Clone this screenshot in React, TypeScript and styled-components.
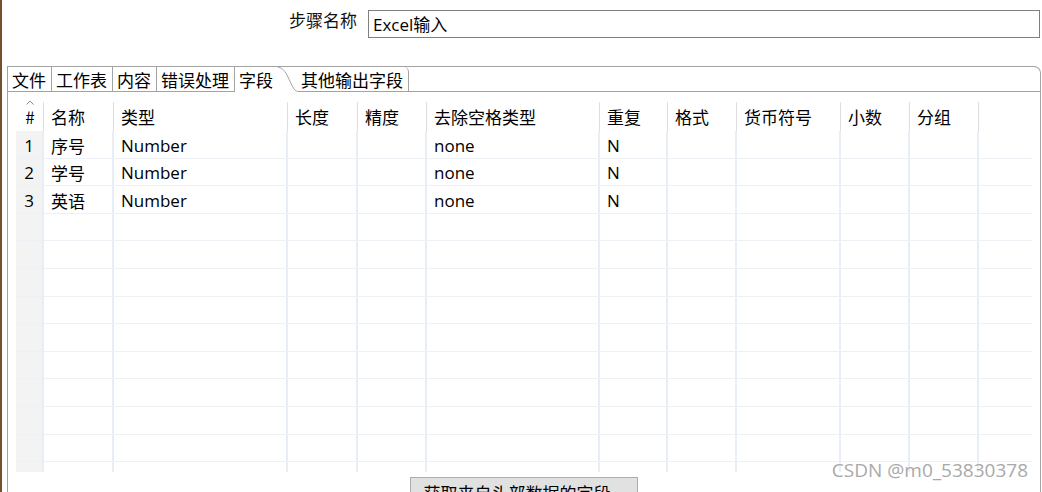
import React from "react";
import styled, { createGlobalStyle } from "styled-components";

const GlobalStyle = createGlobalStyle`
  html, body {
    margin: 0;
    padding: 0;
    background: #fff;
    overflow: hidden;
  }
  body {
    font-family: "Open Sans", "Noto Sans CJK SC", sans-serif;
    font-size: 17px;
    color: #000;
  }
`;

type Column = { key: string; title: string; width: number };

const columns: Column[] = [
  { key: "no", title: "#", width: 28 },
  { key: "name", title: "名称", width: 70 },
  { key: "type", title: "类型", width: 174 },
  { key: "length", title: "长度", width: 70 },
  { key: "precision", title: "精度", width: 69 },
  { key: "trim", title: "去除空格类型", width: 173 },
  { key: "repeat", title: "重复", width: 68 },
  { key: "format", title: "格式", width: 69 },
  { key: "currency", title: "货币符号", width: 104 },
  { key: "decimal", title: "小数", width: 69 },
  { key: "group", title: "分组", width: 69 },
  { key: "rest", title: "", width: 53 },
];

const fields: Record<string, string>[] = [
  { name: "序号", type: "Number", trim: "none", repeat: "N" },
  { name: "学号", type: "Number", trim: "none", repeat: "N" },
  { name: "英语", type: "Number", trim: "none", repeat: "N" },
];

const tabs = ["文件", "工作表", "内容", "错误处理", "字段", "其他输出字段"];
const activeTab = 4;
const ROW_COUNT = 13;

export default function App() {
  return (
    <Frame>
      <GlobalStyle />
      <StepRow>
        <StepLabel>步骤名称</StepLabel>
        <StepInput>Excel输入</StepInput>
      </StepRow>

      <Folder>
        <TabBar>
          {tabs.map((t, i) => (
            <React.Fragment key={t}>
              <Tab $active={i === activeTab} $last={i === tabs.length - 1}>
                {t}
              </Tab>
              {i === activeTab && (
                <Slant width="21" height="25" viewBox="0 0 21 25">
                  <path
                    d="M0 0.5 C4 0.5 6 3 9 8 C12 14 14 19 16 22 C17.5 24 19 24.5 21 24.5"
                    fill="none"
                    stroke="#a3a3a3"
                    strokeWidth="1"
                  />
                </Slant>
              )}
            </React.Fragment>
          ))}
          <TabFiller />
        </TabBar>

        <TableArea>
          <Table>
            <HeaderRow>
              {columns.map((c) => (
                <HeaderCell key={c.key} $w={c.width} $index={c.key === "no"} $last={c.key === "rest"}>
                  {c.key === "no" && (
                    <SortMark width="8" height="5" viewBox="0 0 8 5">
                      <path d="M0.5 4.5 L4 1 L7.5 4.5" fill="none" stroke="#8a8a8a" strokeWidth="1" />
                    </SortMark>
                  )}
                  {c.title}
                </HeaderCell>
              ))}
            </HeaderRow>
            <Body>
              {Array.from({ length: ROW_COUNT }).map((_, r) => {
                const f = fields[r];
                return (
                  <Row key={r}>
                    {columns.map((c) => (
                      <Cell key={c.key} $w={c.width} $index={c.key === "no"} $last={c.key === "rest"}>
                        {c.key === "no" ? (f ? r + 1 : "") : f ? f[c.key] ?? "" : ""}
                      </Cell>
                    ))}
                  </Row>
                );
              })}
            </Body>
          </Table>
          <ButtonRow>
            <ActionButton>获取来自头部数据的字段...</ActionButton>
          </ButtonRow>
        </TableArea>
      </Folder>

      <Watermark>CSDN @m0_53830378</Watermark>
    </Frame>
  );
}

const Frame = styled.div`
  position: relative;
  box-sizing: border-box;
  height: 492px;
  overflow: hidden;
  border-left: 2px solid #74502f;
  padding: 0 1px 0 5px;
  display: flex;
  flex-direction: column;
`;

const StepRow = styled.div`
  display: flex;
  justify-content: flex-end;
  align-items: flex-start;
  gap: 11px;
  padding: 10px 1px 0 0;
`;

const StepLabel = styled.label`
  font-family: "Noto Sans CJK SC", sans-serif;
  font-size: 17px;
  line-height: 20px;
  color: #111;
`;

const StepInput = styled.div`
  box-sizing: border-box;
  width: 672px;
  height: 28px;
  border: 1px solid #7f7f7f;
  padding-left: 4px;
  line-height: 27px;
  background: #fff;
`;

const Folder = styled.div`
  flex: 1;
  margin-top: 28px;
  border: 1px solid #a3a3a3;
  border-bottom: none;
  border-top-right-radius: 7px;
  display: flex;
  flex-direction: column;
  min-height: 0;
`;

const TabBar = styled.div`
  display: flex;
  height: 25px;
`;

const Tab = styled.div<{ $active?: boolean; $last?: boolean }>`
  box-sizing: border-box;
  height: 25px;
  padding: 0 5px 0 ${(p) => (p.$last ? "2px" : "4px")};
  line-height: 25px;
  white-space: nowrap;
  font-family: "Noto Sans CJK SC", sans-serif;
  background: #fff;
  border-right: ${(p) => (p.$active ? "none" : "1px solid #a3a3a3")};
  border-bottom: ${(p) => (p.$active ? "none" : "1px solid #a3a3a3")};
  border-top-right-radius: ${(p) => (p.$last ? "5px" : "0")};
`;

const Slant = styled.svg`
  display: block;
  flex: none;
`;

const TabFiller = styled.div`
  flex: 1;
  border-bottom: 1px solid #a3a3a3;
`;

const TableArea = styled.div`
  padding: 5px 8px 0 8px;
  display: flex;
  flex-direction: column;
`;

const Table = styled.div`
  width: 1016px;
  display: flex;
  flex-direction: column;
`;

const HeaderRow = styled.div`
  display: flex;
  height: 34px;
`;

const HeaderCell = styled.div<{ $w: number; $index?: boolean; $last?: boolean }>`
  position: relative;
  box-sizing: border-box;
  width: ${(p) => p.$w}px;
  flex: none;
  display: flex;
  align-items: center;
  justify-content: ${(p) => (p.$index ? "center" : "flex-start")};
  padding: 4px 0 0 ${(p) => (p.$index ? "0" : "7px")};
  font-family: "Noto Sans CJK SC", sans-serif;
  white-space: nowrap;
  &::after {
    content: "";
    display: ${(p) => (p.$last ? "none" : "block")};
    position: absolute;
    right: 0;
    top: 5px;
    bottom: 0;
    width: 1px;
    background: #dedede;
  }
`;

const SortMark = styled.svg`
  position: absolute;
  top: 3px;
  left: 10px;
`;

const Body = styled.div`
  height: 341px;
  overflow: hidden;
`;

const Row = styled.div`
  display: flex;
  box-sizing: border-box;
  height: 27.6px;
  border-bottom: 1px solid #edf0f4;
`;

const Cell = styled.div<{ $w: number; $index?: boolean; $last?: boolean }>`
  box-sizing: border-box;
  width: ${(p) => p.$w}px;
  flex: none;
  display: flex;
  align-items: center;
  justify-content: ${(p) => (p.$index ? "center" : "flex-start")};
  padding: 2px 0 0 ${(p) => (p.$index ? "0" : "7px")};
  background: ${(p) => (p.$index ? "#f3f3f3" : "#fff")};
  border-right: ${(p) => (p.$last ? "none" : "2px solid #e8eef6")};
  white-space: nowrap;
`;

const ButtonRow = styled.div`
  display: flex;
  justify-content: center;
  margin-top: 5px;
`;

const ActionButton = styled.button`
  box-sizing: border-box;
  height: 32px;
  padding: 0 12px;
  border: 1px solid #adadad;
  background: #e1e1e1;
  font-family: "Noto Sans CJK SC", sans-serif;
  font-size: 17px;
  color: #000;
  line-height: 30px;
`;

const Watermark = styled.div`
  position: absolute;
  right: 14px;
  top: 457px;
  font-family: "Open Sans", sans-serif;
  font-size: 19px;
  color: #a9a9a9;
  text-shadow: 0 0 2px #fff;
  pointer-events: none;
`;
